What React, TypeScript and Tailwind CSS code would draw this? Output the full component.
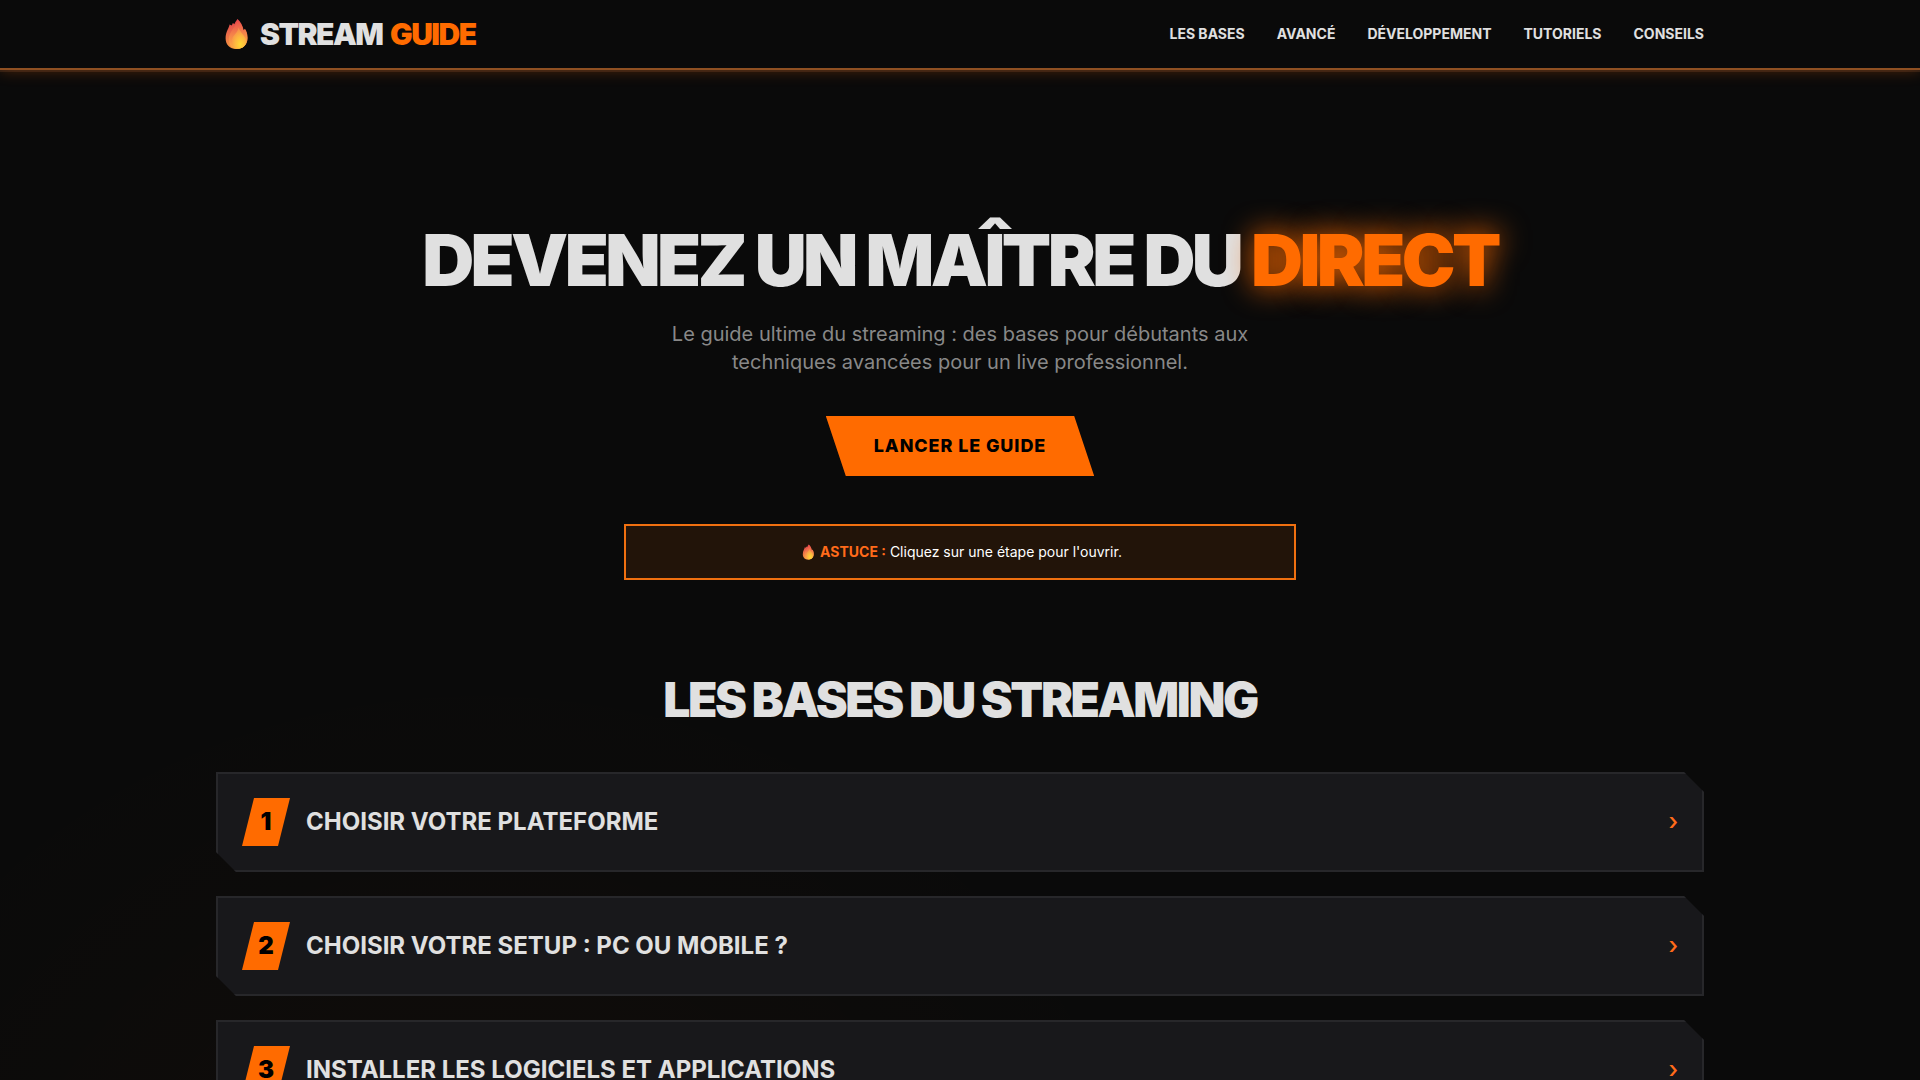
import { useId, useState } from "react";

const navLinks = [
  { label: "Les bases", href: "#bases" },
  { label: "Avancé", href: "#avance" },
  { label: "Développement", href: "#developpement" },
  { label: "Tutoriels", href: "#tutoriels" },
  { label: "Conseils", href: "#conseils" },
];

const steps = [
  { title: "Choisir votre plateforme" },
  { title: "Choisir votre setup : PC ou mobile ?" },
  { title: "Installer les logiciels et applications" },
];

function Flame({ className }: { className: string }) {
  const id = useId();
  return (
    <svg viewBox="0 0 32 32" className={className} aria-hidden="true">
      <defs>
        <linearGradient id={`${id}a`} x1="0.5" y1="0" x2="0.6" y2="1">
          <stop offset="0" stopColor="#e5404a" />
          <stop offset="0.4" stopColor="#e8684a" />
          <stop offset="1" stopColor="#f79a3c" />
        </linearGradient>
        <linearGradient id={`${id}b`} x1="0.5" y1="0" x2="0.6" y2="1">
          <stop offset="0" stopColor="#ea4a4c" />
          <stop offset="0.5" stopColor="#f5854a" />
          <stop offset="1" stopColor="#ffb040" />
        </linearGradient>
        <radialGradient id={`${id}c`} cx="0.6" cy="0.8" r="0.75">
          <stop offset="0" stopColor="#ffd934" />
          <stop offset="0.5" stopColor="#fdb640" />
          <stop offset="1" stopColor="#f78c4a" />
        </radialGradient>
      </defs>
      <path
        d="M17.500 1C16 3 15 4.500 14.300 6.300C13.900 5.700 13.400 5.300 12.800 5C12.600 6 12.200 6.800 11.600 7.500C11.100 7 10.300 6.600 9.500 6.400C9.400 9.500 5.600 13.200 5.600 20.300C5.600 26.800 9.800 31 16.400 31C23.400 31 27.600 26.400 27.600 19.800C27.600 15.600 26.200 12.600 24.900 10.800C24.600 11.400 24.100 11.800 23.600 12C22.700 7.400 20.500 3.600 17.500 1Z"
        fill={`url(#${id}a)`}
      />
      <path
        d="M17.500 1.500C17 8 8.800 13 8.800 21.500C8.800 27.500 12.300 30.800 17 30.800C22.900 30.800 27.300 27.200 27.300 20C27.300 16 26 13 24.900 11.300C24.600 12 24 12.600 23.400 12.800C22.500 8 20.500 4.500 17.500 1.500Z"
        fill={`url(#${id}b)`}
      />
      <path
        d="M18.500 9.500C18.200 15 11.800 17 11.800 23.500C11.800 28.500 14.500 30.600 18 30.600C22.700 30.600 26 27.800 26 23C26 17.500 20.500 15.500 18.500 9.500Z"
        fill={`url(#${id}c)`}
      />
    </svg>
  );
}

function Step({ number, title }: { number: number; title: string }) {
  const [open, setOpen] = useState(false);
  return (
    <li className="border-2 border-[#27272a] bg-[#18181b] [clip-path:polygon(0_0,calc(100%-20px)_0,100%_20px,100%_100%,20px_100%,0_calc(100%-20px))]">
      <button
        type="button"
        aria-expanded={open}
        onClick={() => setOpen(!open)}
        className="flex w-full cursor-pointer items-center justify-between p-6 text-left text-2xl uppercase"
      >
        <span className="flex items-center gap-4 font-bold">
          <span className="flex size-12 shrink-0 items-center justify-center bg-[#ff6b00] font-black text-black [clip-path:polygon(25%_0,100%_0,75%_100%,0_100%)]">
            {number}
          </span>
          <span>{title}</span>
        </span>
        <span className="font-medium text-[#ff6b1a]" aria-hidden="true">
          ›
        </span>
      </button>
    </li>
  );
}

export default function App() {
  return (
    <div className="h-screen overflow-x-hidden overflow-y-auto bg-[#0a0a0a] bg-[radial-gradient(ellipse_at_25%_120%,rgba(255,107,0,0.03),transparent_35%)] font-['Inter',sans-serif] text-[#e0e0e0] [scrollbar-width:none]">
      <header className="border-b-2 border-[#8f5022] bg-[#0a0a0a] shadow-[0_2px_0_rgba(255,160,100,0.12),0_0_15px_rgba(255,107,0,0.3)]">
        <div className="mx-auto flex max-w-[1536px] items-center justify-between px-6 py-4">
          <a href="#accueil" className="flex items-center gap-2 text-3xl font-black tracking-tighter uppercase">
            <Flame className="ml-1 size-8" />
            <span>
              Stream <span className="ml-[3px] text-[#ff6b00]">Guide</span>
            </span>
          </a>
          <nav aria-label="Navigation principale" className="flex gap-8 text-sm font-bold uppercase">
            {navLinks.map((link) => (
              <a key={link.href} href={link.href}>
                {link.label}
              </a>
            ))}
          </nav>
        </div>
      </header>

      <main className="mx-auto max-w-[1536px] px-6">
        <section id="accueil" className="flex flex-col items-center pt-[154px] pb-24 text-center">
          <h1 className="mb-6 text-7xl leading-none font-black tracking-tighter uppercase">
            Devenez un maître du{" "}
            <span className="text-[#ff6b00] [text-shadow:0_0_30px_#ff6b00]">direct</span>
          </h1>
          <p className="mb-10 max-w-2xl text-xl text-[#888888]">
            Le guide ultime du streaming : des bases pour débutants aux
            <br />
            techniques avancées pour un live professionnel.
          </p>
          <a
            href="#bases"
            className="bg-[#ff6b00] px-12 py-4 text-lg font-extrabold tracking-wider text-black uppercase [clip-path:polygon(0_0,calc(100%-20px)_0,100%_100%,20px_100%)]"
          >
            Lancer le guide
          </a>
          <p className="mt-12 flex w-full max-w-2xl items-center justify-center border-2 border-[#f07010] bg-[#221409] p-4 text-sm text-white">
            <Flame className="mr-1 ml-0.5 size-4" />
            <span>
              <strong className="font-bold text-[#ff6b1a]">ASTUCE :</strong> Cliquez sur une étape pour l'ouvrir.
            </span>
          </p>
        </section>

        <section id="bases">
          <h2 className="mb-12 text-center text-5xl font-black tracking-tighter uppercase">Les bases du streaming</h2>
          <ol className="flex flex-col gap-6 pb-24">
            {steps.map((step, index) => (
              <Step key={step.title} number={index + 1} title={step.title} />
            ))}
          </ol>
        </section>
      </main>
    </div>
  );
}
